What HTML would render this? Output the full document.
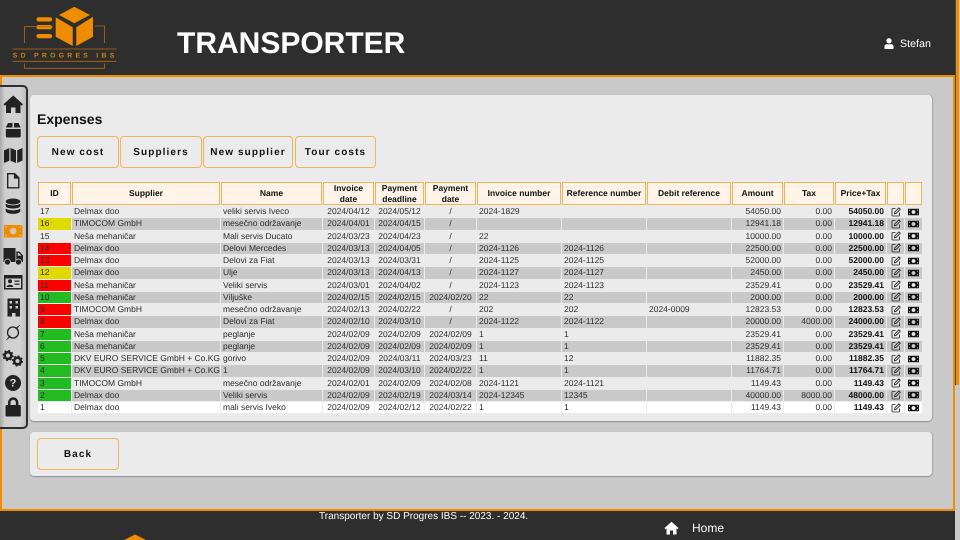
<!DOCTYPE html>
<html><head><meta charset="utf-8"><title>Transporter</title>
<style>
*{box-sizing:border-box}
html,body{margin:0;padding:0;width:960px;height:540px;overflow:hidden;background:#c9c9c9;font-family:"Liberation Sans",sans-serif;color:#2b2b2b;text-rendering:geometricPrecision}
.abs{position:absolute}
#hdr{left:0;top:0;width:955px;height:77px;background:#2e2e2e;border-bottom:2px solid #f08c00}
#title{left:177px;top:27px;font-size:30px;font-weight:bold;color:#fff;line-height:34px;white-space:nowrap}
#user{left:900px;top:37.500px;font-size:10.700px;color:#fff;line-height:13px}
#main{left:0;top:77px;width:955px;height:434px;background:#c9c9c9;border:2px solid #f08c00;border-top:0}
#foot{left:0;top:511px;width:955px;height:29px;background:#2e2e2e}
#track{left:955px;top:0;width:5px;height:540px;background:#c9c9c9}
#thumb{left:956px;top:0;width:3px;height:385px;background:#f08c00}
#tgap{left:955px;top:0;width:1px;height:385px;background:#4a4a4a}
#side{left:0;top:85px;width:28px;height:344px;border:2px solid #2e2e2e;border-left:0;border-radius:0 5px 5px 0;background:linear-gradient(90deg,#a9a9a9 0,#cfcfcf 5px,#d2d2d2 20px,#bdbdbd 100%)}
.panel{background:#ebebeb;border-radius:4px;box-shadow:0 1px 1px #8f8f8f,1px 0 1px #aaa}
#h2{left:37px;top:110px;font-size:14px;font-weight:bold;line-height:18px;color:#111}
.btn{height:32px;background:#ebebeb;border:1px solid #efb45c;border-radius:4px;font-size:10px;font-weight:bold;letter-spacing:1.100px;text-align:center;line-height:32px;color:#111;white-space:nowrap}
table{position:absolute;left:37px;top:181px;table-layout:fixed;width:886px;border-collapse:separate;border-spacing:1px;font-size:8.500px;line-height:10px}
td,th{padding:0 2px 1px;overflow:hidden;white-space:nowrap;height:11.250px}
th{height:22.500px;background:#fff4e7;border:1px solid #efb45c;padding:0;font-weight:bold;text-align:center;color:#111;line-height:10.500px}
tbody tr:nth-child(even) td{background:#c9c9c9}
tbody tr:last-child td{background:#fff}
td.c{text-align:center;padding:0 0 1px}
td.r{text-align:right}
td.b{font-weight:bold;color:#111}
td.i{padding:0;text-align:center;line-height:0}
tbody tr td.y{background:#e0da00}
tbody tr td.x{background:#ff0000}
tbody tr td.g{background:#22bb22}
svg{display:block}
td.i svg{display:inline-block;vertical-align:middle}
</style></head><body>
<svg width="0" height="0" style="position:absolute"><defs>
<symbol id="ed" viewBox="0 0 20 20"><path d="M9 3H3.500A1.500 1.500 0 0 0 2 4.500V16.500A1.500 1.500 0 0 0 3.500 18H15.500A1.500 1.500 0 0 0 17 16.500V11" fill="none" stroke="#222" stroke-width="1.700"/><path d="M7 13.500L7.600 10L15.800 1.800L18.500 4.500L10.300 12.700Z" fill="none" stroke="#222" stroke-width="1.700"/></symbol>
<symbol id="ca" viewBox="0 0 20 14"><path fill-rule="evenodd" fill="#111" d="M0 1H20V13H0ZM10 3.500A3.500 3.500 0 1 0 10 10.500A3.500 3.500 0 1 0 10 3.500ZM2 3V5A2 2 0 0 0 4 3ZM16 3A2 2 0 0 0 18 5V3ZM2 9V11H4A2 2 0 0 0 2 9ZM18 9A2 2 0 0 0 16 11H18Z"/></symbol>
</defs></svg>

<div class="abs" id="hdr"></div>
<svg class="abs" style="left:0;top:0" width="130" height="75" viewBox="0 0 130 75">
<path fill="#f08c00" d="M74.300 6.700L90 15L74.300 23.300L59 15ZM55.700 17.300L72.700 27.300V46L55.700 36.700ZM76.300 27.300L93 16.700V36.700L76.300 46Z"/>
<rect x="36.500" y="17.300" width="15.500" height="4.200" rx="2" fill="#f08c00"/><rect x="36.500" y="25" width="15.500" height="4.200" rx="2" fill="#f08c00"/><rect x="36.500" y="34" width="15.500" height="4.200" rx="2" fill="#f08c00"/>
<path fill="none" stroke="#b56c08" stroke-width=".8" d="M53 26.700H24.500V43M95 26H104.500V43M12.500 49H116.500M12.500 61.300H116.500M24.500 63.500V68.300H104.500V63.500"/>
<text x="12.800" y="57.500" font-family="Liberation Sans" font-size="6.800" letter-spacing="3.300" font-weight="bold" fill="#d0820c">SD PROGRES IBS</text>
</svg>
<div class="abs" id="title">TRANSPORTER</div>
<svg class="abs" style="left:884px;top:38px" width="10" height="11" viewBox="0 0 11 12"><circle cx="5.500" cy="3" r="2.900" fill="#fff"/><path fill="#fff" d="M1 12A1 1 0 0 1 .5 11V9.500C.5 7.500 2 6.800 3 6.800H8C9 6.800 10.500 7.500 10.500 9.500V11A1 1 0 0 1 10 12Z"/></svg>
<div class="abs" id="user">Stefan</div>

<div class="abs" id="main"></div>
<div class="abs panel" style="left:30px;top:95px;width:902px;height:326px"></div>
<div class="abs panel" style="left:30px;top:432px;width:902px;height:44px"></div>

<div class="abs" id="side"></div>
<svg class="abs" style="left:0;top:85px" width="28" height="344" viewBox="0 85 28 344">
<g fill="#222">
<!-- home -->
<path d="M13.300 95.500L23 104.300L21.700 105.700L20.500 104.600V113H15.500V107.500H11V113H6V104.600L4.800 105.700L3.500 104.300Z"/>
<!-- box -->
<path d="M8 123H12.500V127.500H5.800ZM14 123H18.500L20.700 127.500H14ZM5.800 129H20.700V136A1.500 1.500 0 0 1 19.200 137.500H7.300A1.500 1.500 0 0 1 5.800 136Z"/>
<!-- map -->
<path d="M4 150.500L9.300 148V160.800L4 163ZM10.500 148L16 150.200V163L10.500 160.800ZM17.200 150.200L22.500 148V160.500L17.200 163Z"/>
<!-- file -->
<path fill-rule="evenodd" d="M7 173H15L19.500 177.500V188.500H7ZM8.400 174.400V187.100H18.100V178.600H13.900V174.400Z"/>
<!-- db -->
<ellipse cx="13" cy="201.500" rx="7.300" ry="3"/>
<path d="M5.700 203.300C7 206 19 206 20.300 203.300V206.300C19 209.300 7 209.300 5.700 206.300ZM5.700 208.300C7 211 19 211 20.300 208.300V211.300C19 214.800 7 214.800 5.700 211.300Z"/>
<!-- truck -->
<path d="M3.500 248H15.500V262H3.500ZM16.300 251.500H19.500L23 255.500V262H16.300Z"/>
<path d="M17.700 253H19L21.300 255.700H17.700Z" fill="#cfcfcf"/>
<circle cx="7.500" cy="262" r="3" stroke="#cfcfcf" stroke-width=".7"/><circle cx="18.500" cy="262" r="3" stroke="#cfcfcf" stroke-width=".7"/>
<!-- id -->
<path fill-rule="evenodd" d="M4 275H22.500V289.500H4ZM5.500 278.500V288H21V278.500Z"/>
<circle cx="10" cy="281.300" r="2"/><path d="M6.700 287C6.700 284 13.300 284 13.300 287ZM14.500 280.500H19.500V281.800H14.500ZM14.500 283.500H19.500V284.800H14.500Z"/>
<!-- building -->
<path d="M7.500 298.500H20V316.500H15.500V313H12V316.500H7.500Z"/>
<g fill="#c8c8c8"><rect x="9.500" y="301" width="2.500" height="2.500"/><rect x="15.500" y="301" width="2.500" height="2.500"/><rect x="9.500" y="306" width="2.500" height="2.500"/><rect x="15.500" y="306" width="2.500" height="2.500"/></g>
<!-- ring -->
<circle cx="13" cy="332.500" r="5.500" fill="none" stroke="#222" stroke-width="1.300"/>
<path d="M19.800 325L16.300 329.500L15.500 328.300ZM6.300 340L9.800 335.500L10.500 336.700Z" stroke="#222" stroke-width=".5"/>
<!-- cogs -->
<circle cx="8" cy="355.500" r="3.300" fill="none" stroke="#222" stroke-width="2.600"/>
<circle cx="8" cy="355.500" r="4.700" fill="none" stroke="#222" stroke-width="1.800" stroke-dasharray="1.800 1.900"/>
<circle cx="17.500" cy="361" r="3.300" fill="none" stroke="#222" stroke-width="2.600"/>
<circle cx="17.500" cy="361" r="4.700" fill="none" stroke="#222" stroke-width="1.800" stroke-dasharray="1.800 1.900"/>
<!-- q -->
<circle cx="13" cy="383" r="8"/>
<!-- lock -->
<path fill-rule="evenodd" d="M8 405V402.500A5.200 5.200 0 0 1 18.400 402.500V405H19.500A1.300 1.300 0 0 1 20.800 406.300V415.200A1.300 1.300 0 0 1 19.500 416.500H6.800A1.300 1.300 0 0 1 5.500 415.200V406.300A1.300 1.300 0 0 1 6.800 405ZM10.500 405H15.900V402.500A2.700 2.700 0 0 0 10.500 402.500Z"/>
</g>
<text x="13" y="386.700" text-anchor="middle" font-family="Liberation Sans" font-size="11" font-weight="bold" fill="#ddd">?</text>
<!-- cash -->
<rect x="4" y="225" width="18.500" height="12.500" rx="1" fill="#f08c00"/>
<circle cx="13.200" cy="231" r="3.300" fill="#d8c8b0"/>
<circle cx="6" cy="227" r=".8" fill="#d8c8b0"/><circle cx="20.500" cy="227" r=".8" fill="#d8c8b0"/><circle cx="6" cy="235.500" r=".8" fill="#d8c8b0"/><circle cx="20.500" cy="235.500" r=".8" fill="#d8c8b0"/>
</svg>

<div class="abs" id="h2">Expenses</div>
<div class="abs btn" style="left:37px;top:136px;width:82px">New cost</div>
<div class="abs btn" style="left:120px;top:136px;width:82px">Suppliers</div>
<div class="abs btn" style="left:203px;top:136px;width:90px">New supplier</div>
<div class="abs btn" style="left:295px;top:136px;width:81px">Tour costs</div>

<table>
<colgroup><col style="width:33px"><col style="width:148px"><col style="width:101px"><col style="width:51px"><col style="width:49px"><col style="width:51px"><col style="width:84px"><col style="width:84px"><col style="width:84px"><col style="width:51px"><col style="width:50px"><col style="width:51px"><col style="width:17px"><col style="width:17px"></colgroup>
<thead><tr><th>ID</th><th>Supplier</th><th>Name</th><th>Invoice<br>date</th><th>Payment<br>deadline</th><th>Payment<br>date</th><th>Invoice number</th><th>Reference number</th><th>Debit reference</th><th>Amount</th><th>Tax</th><th>Price+Tax</th><th></th><th></th></tr></thead>
<tbody>
<tr><td>17</td><td>Delmax doo</td><td>veliki servis Iveco</td><td class="c">2024/04/12</td><td class="c">2024/05/12</td><td class="c">/</td><td>2024-1829</td><td></td><td></td><td class="r">54050.00</td><td class="r">0.00</td><td class="r b">54050.00</td><td class="i"><svg width="10" height="10"><use href="#ed"/></svg></td><td class="i"><svg width="11" height="8"><use href="#ca"/></svg></td></tr>
<tr><td class="y">16</td><td>TIMOCOM GmbH</td><td>mesečno održavanje</td><td class="c">2024/04/01</td><td class="c">2024/04/15</td><td class="c">/</td><td></td><td></td><td></td><td class="r">12941.18</td><td class="r">0.00</td><td class="r b">12941.18</td><td class="i"><svg width="10" height="10"><use href="#ed"/></svg></td><td class="i"><svg width="11" height="8"><use href="#ca"/></svg></td></tr>
<tr><td>15</td><td>Neša mehaničar</td><td>Mali servis Ducato</td><td class="c">2024/03/23</td><td class="c">2024/04/23</td><td class="c">/</td><td>22</td><td></td><td></td><td class="r">10000.00</td><td class="r">0.00</td><td class="r b">10000.00</td><td class="i"><svg width="10" height="10"><use href="#ed"/></svg></td><td class="i"><svg width="11" height="8"><use href="#ca"/></svg></td></tr>
<tr><td class="x">14</td><td>Delmax doo</td><td>Delovi Mercedes</td><td class="c">2024/03/13</td><td class="c">2024/04/05</td><td class="c">/</td><td>2024-1126</td><td>2024-1126</td><td></td><td class="r">22500.00</td><td class="r">0.00</td><td class="r b">22500.00</td><td class="i"><svg width="10" height="10"><use href="#ed"/></svg></td><td class="i"><svg width="11" height="8"><use href="#ca"/></svg></td></tr>
<tr><td class="x">13</td><td>Delmax doo</td><td>Delovi za Fiat</td><td class="c">2024/03/13</td><td class="c">2024/03/31</td><td class="c">/</td><td>2024-1125</td><td>2024-1125</td><td></td><td class="r">52000.00</td><td class="r">0.00</td><td class="r b">52000.00</td><td class="i"><svg width="10" height="10"><use href="#ed"/></svg></td><td class="i"><svg width="11" height="8"><use href="#ca"/></svg></td></tr>
<tr><td class="y">12</td><td>Delmax doo</td><td>Ulje</td><td class="c">2024/03/13</td><td class="c">2024/04/13</td><td class="c">/</td><td>2024-1127</td><td>2024-1127</td><td></td><td class="r">2450.00</td><td class="r">0.00</td><td class="r b">2450.00</td><td class="i"><svg width="10" height="10"><use href="#ed"/></svg></td><td class="i"><svg width="11" height="8"><use href="#ca"/></svg></td></tr>
<tr><td class="x">11</td><td>Neša mehaničar</td><td>Veliki servis</td><td class="c">2024/03/01</td><td class="c">2024/04/02</td><td class="c">/</td><td>2024-1123</td><td>2024-1123</td><td></td><td class="r">23529.41</td><td class="r">0.00</td><td class="r b">23529.41</td><td class="i"><svg width="10" height="10"><use href="#ed"/></svg></td><td class="i"><svg width="11" height="8"><use href="#ca"/></svg></td></tr>
<tr><td class="g">10</td><td>Neša mehaničar</td><td>Viljuške</td><td class="c">2024/02/15</td><td class="c">2024/02/15</td><td class="c">2024/02/20</td><td>22</td><td>22</td><td></td><td class="r">2000.00</td><td class="r">0.00</td><td class="r b">2000.00</td><td class="i"><svg width="10" height="10"><use href="#ed"/></svg></td><td class="i"><svg width="11" height="8"><use href="#ca"/></svg></td></tr>
<tr><td class="x">9</td><td>TIMOCOM GmbH</td><td>mesečno održavanje</td><td class="c">2024/02/13</td><td class="c">2024/02/22</td><td class="c">/</td><td>202</td><td>202</td><td>2024-0009</td><td class="r">12823.53</td><td class="r">0.00</td><td class="r b">12823.53</td><td class="i"><svg width="10" height="10"><use href="#ed"/></svg></td><td class="i"><svg width="11" height="8"><use href="#ca"/></svg></td></tr>
<tr><td class="x">8</td><td>Delmax doo</td><td>Delovi za Fiat</td><td class="c">2024/02/10</td><td class="c">2024/03/10</td><td class="c">/</td><td>2024-1122</td><td>2024-1122</td><td></td><td class="r">20000.00</td><td class="r">4000.00</td><td class="r b">24000.00</td><td class="i"><svg width="10" height="10"><use href="#ed"/></svg></td><td class="i"><svg width="11" height="8"><use href="#ca"/></svg></td></tr>
<tr><td class="g">7</td><td>Neša mehaničar</td><td>peglanje</td><td class="c">2024/02/09</td><td class="c">2024/02/09</td><td class="c">2024/02/09</td><td>1</td><td>1</td><td></td><td class="r">23529.41</td><td class="r">0.00</td><td class="r b">23529.41</td><td class="i"><svg width="10" height="10"><use href="#ed"/></svg></td><td class="i"><svg width="11" height="8"><use href="#ca"/></svg></td></tr>
<tr><td class="g">6</td><td>Neša mehaničar</td><td>peglanje</td><td class="c">2024/02/09</td><td class="c">2024/02/09</td><td class="c">2024/02/09</td><td>1</td><td>1</td><td></td><td class="r">23529.41</td><td class="r">0.00</td><td class="r b">23529.41</td><td class="i"><svg width="10" height="10"><use href="#ed"/></svg></td><td class="i"><svg width="11" height="8"><use href="#ca"/></svg></td></tr>
<tr><td class="g">5</td><td>DKV EURO SERVICE GmbH + Co.KG</td><td>gorivo</td><td class="c">2024/02/09</td><td class="c">2024/03/11</td><td class="c">2024/03/23</td><td>11</td><td>12</td><td></td><td class="r">11882.35</td><td class="r">0.00</td><td class="r b">11882.35</td><td class="i"><svg width="10" height="10"><use href="#ed"/></svg></td><td class="i"><svg width="11" height="8"><use href="#ca"/></svg></td></tr>
<tr><td class="g">4</td><td>DKV EURO SERVICE GmbH + Co.KG</td><td>1</td><td class="c">2024/02/09</td><td class="c">2024/03/10</td><td class="c">2024/02/22</td><td>1</td><td>1</td><td></td><td class="r">11764.71</td><td class="r">0.00</td><td class="r b">11764.71</td><td class="i"><svg width="10" height="10"><use href="#ed"/></svg></td><td class="i"><svg width="11" height="8"><use href="#ca"/></svg></td></tr>
<tr><td class="g">3</td><td>TIMOCOM GmbH</td><td>mesečno održavanje</td><td class="c">2024/02/01</td><td class="c">2024/02/09</td><td class="c">2024/02/08</td><td>2024-1121</td><td>2024-1121</td><td></td><td class="r">1149.43</td><td class="r">0.00</td><td class="r b">1149.43</td><td class="i"><svg width="10" height="10"><use href="#ed"/></svg></td><td class="i"><svg width="11" height="8"><use href="#ca"/></svg></td></tr>
<tr><td class="g">2</td><td>Delmax doo</td><td>Veliki servis</td><td class="c">2024/02/09</td><td class="c">2024/02/19</td><td class="c">2024/03/14</td><td>2024-12345</td><td>12345</td><td></td><td class="r">40000.00</td><td class="r">8000.00</td><td class="r b">48000.00</td><td class="i"><svg width="10" height="10"><use href="#ed"/></svg></td><td class="i"><svg width="11" height="8"><use href="#ca"/></svg></td></tr>
<tr><td>1</td><td>Delmax doo</td><td>mali servis Iveko</td><td class="c">2024/02/09</td><td class="c">2024/02/12</td><td class="c">2024/02/22</td><td>1</td><td>1</td><td></td><td class="r">1149.43</td><td class="r">0.00</td><td class="r b">1149.43</td><td class="i"><svg width="10" height="10"><use href="#ed"/></svg></td><td class="i"><svg width="11" height="8"><use href="#ca"/></svg></td></tr>
</tbody></table>

<div class="abs btn" style="left:37px;top:438px;width:82px">Back</div>

<div class="abs" id="foot"></div>
<div class="abs" style="left:319px;top:510px;font-size:10px;line-height:13px;color:#fff;white-space:nowrap">Transporter by SD Progres IBS -- 2023. - 2024.</div>
<svg class="abs" style="left:120px;top:534px" width="30" height="6" viewBox="0 0 30 6"><path fill="#f08c00" d="M15 .5L26 6H4Z"/></svg>
<svg class="abs" style="left:664px;top:521px" width="15" height="14" viewBox="0 0 15 14"><path fill="#fff" d="M7.500 .8L14.500 7L13.500 8.200L12.500 7.300V13.500H9V9.500H6V13.500H2.500V7.300L1.500 8.200L.5 7Z"/></svg>
<div class="abs" style="left:692px;top:521px;font-size:12px;line-height:15px;color:#fff">Home</div>

<div class="abs" id="track"></div>
<div class="abs" id="tgap"></div>
<div class="abs" id="thumb"></div>
</body></html>
